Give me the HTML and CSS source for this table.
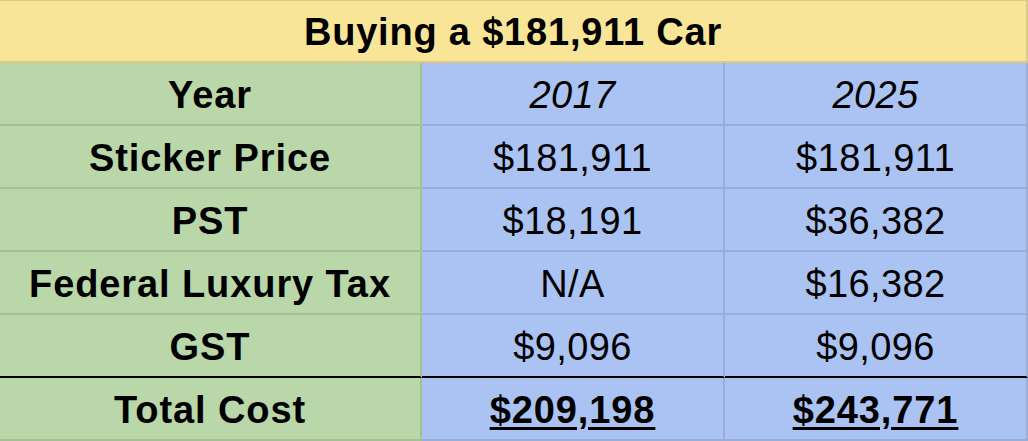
FILE: index.html
```html
<!DOCTYPE html>
<html>
<head>
<meta charset="utf-8">
<link rel="stylesheet" href="styles.css">
</head>
<body>
<div class="sheet">
  <div class="cell title">Buying a $181,911 Car</div>

  <div class="cell label">Year</div>
  <div class="cell val year">2017</div>
  <div class="cell val year">2025</div>

  <div class="cell label">Sticker Price</div>
  <div class="cell val">$181,911</div>
  <div class="cell val">$181,911</div>

  <div class="cell label">PST</div>
  <div class="cell val">$18,191</div>
  <div class="cell val">$36,382</div>

  <div class="cell label">Federal Luxury Tax</div>
  <div class="cell val">N/A</div>
  <div class="cell val">$16,382</div>

  <div class="cell label pre-total">GST</div>
  <div class="cell val pre-total">$9,096</div>
  <div class="cell val pre-total">$9,096</div>

  <div class="cell label">Total Cost</div>
  <div class="cell val total">$209,198</div>
  <div class="cell val total">$243,771</div>
</div>
</body>
</html>
```

FILE: styles.css
```css
html, body {
  margin: 0;
  padding: 0;
  background: #ffffff;
}

.sheet {
  width: 1028px;
  height: 441px;
  display: grid;
  grid-template-columns: 422px 303px 303px;
  grid-template-rows: 63px repeat(6, 63px);
  font-family: "Liberation Sans", Arial, sans-serif;
  color: #000;
  box-sizing: border-box;
}

.cell {
  display: flex;
  align-items: center;
  justify-content: center;
  border-right: 2px solid rgba(0, 0, 0, 0.11);
  border-bottom: 2px solid rgba(0, 0, 0, 0.11);
  box-sizing: border-box;
  font-size: 38px;
  letter-spacing: 0.4px;
  padding-top: 3px;
  white-space: nowrap;
}

.title {
  grid-column: 1 / 4;
  background: #f8e597;
  font-weight: bold;
  font-size: 38px;
  letter-spacing: 0.8px;
  border-top: 1px solid rgba(0, 0, 0, 0.11);
  padding-top: 2px;
}

.label {
  background: #b9d7a8;
  font-weight: bold;
  letter-spacing: 0.9px;
}

.val {
  background: #abc3f2;
}

.year {
  font-style: italic;
}

.pre-total {
  border-bottom: 2px solid #000;
}

.total {
  font-weight: bold;
  letter-spacing: 0.9px;
  text-decoration: underline;
  text-decoration-thickness: 3px;
  text-underline-offset: 4px;
}
```
